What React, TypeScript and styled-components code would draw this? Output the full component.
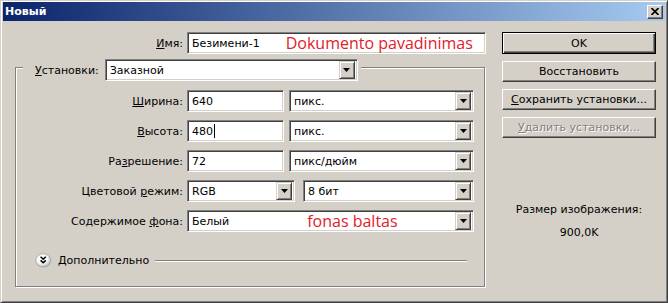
import styled, { createGlobalStyle } from 'styled-components'

const GlobalStyle = createGlobalStyle`
  html, body {
    margin: 0;
    padding: 0;
    background: #d4d0c8;
  }
  body {
    font-family: 'DejaVu Sans', Tahoma, sans-serif;
    font-size: 11px;
    color: #000;
  }
`

const Window = styled.div`
  width: 668px;
  height: 303px;
  box-sizing: border-box;
  background: #d4d0c8;
  border: 1px solid;
  border-color: #d4d0c8 #404040 #404040 #d4d0c8;
  box-shadow: inset 1px 1px 0 #fff, inset -1px -1px 0 #808080;
  padding: 1px 2px 2px 2px;
  display: flex;
  flex-direction: column;
`

const TitleBar = styled.div`
  height: 19px;
  display: flex;
  align-items: center;
  padding: 0 2px 0 2px;
  background: linear-gradient(to right, #0a246a, #a6caf0);
`

const Title = styled.span`
  color: #fff;
  font-weight: bold;
  font-size: 11px;
  flex: 1;
`

const CloseButton = styled.div`
  width: 16px;
  height: 14px;
  box-sizing: border-box;
  display: flex;
  align-items: center;
  justify-content: center;
  background: #d4d0c8;
  border: 1px solid;
  border-color: #fff #404040 #404040 #fff;
  box-shadow: inset -1px -1px 0 #808080;
`

const Body = styled.div`
  display: flex;
  padding: 11px 0 0 12px;
`

const LeftColumn = styled.div`
  width: 471px;
  display: flex;
  flex-direction: column;
`

const RightColumn = styled.div`
  width: 154px;
  margin-left: 16px;
  display: flex;
  flex-direction: column;
  gap: 7px;
`

const FieldRow = styled.div<{ $label: number }>`
  display: grid;
  grid-template-columns: ${(p) => p.$label}px auto;
  column-gap: 4px;
  align-items: center;
`

const Label = styled.span`
  text-align: right;
  white-space: nowrap;
`

const Key = styled.span`
  text-decoration: underline;
`

const Fields = styled.div<{ $gap?: number }>`
  display: flex;
  gap: ${(p) => p.$gap ?? 5}px;
`

const Field = styled.div<{ $w: number }>`
  width: ${(p) => p.$w}px;
  height: 22px;
  box-sizing: border-box;
  background: #fff;
  border: 1px solid;
  border-color: #808080 #fff #fff #808080;
  box-shadow: inset 1px 1px 0 #404040, inset -1px -1px 0 #d4d0c8;
  display: flex;
  align-items: center;
  padding: 0 2px 0 4px;
  white-space: nowrap;
`

const Note = styled.span<{ $at: number }>`
  margin-left: ${(p) => p.$at}px;
  font-family: 'Open Sans', 'Noto Sans', sans-serif;
  font-size: 16px;
  color: #e3202a;
  line-height: 18px;
`

const Caret = styled.span`
  display: inline-block;
  width: 1px;
  height: 14px;
  background: #000;
  margin-left: 1px;
`

const DropArrow = styled.div`
  width: 16px;
  height: 18px;
  box-sizing: border-box;
  margin-left: auto;
  flex: none;
  display: flex;
  align-items: center;
  justify-content: center;
  background: #d4d0c8;
  border: 1px solid;
  border-color: #d4d0c8 #404040 #404040 #d4d0c8;
  box-shadow: inset 1px 1px 0 #fff, inset -1px -1px 0 #808080;
`

const GroupBox = styled.div`
  margin-top: 13px;
  width: 470px;
  height: 220px;
  box-sizing: border-box;
  border: 1px solid #808080;
  box-shadow: inset 1px 1px 0 #fff, 1px 1px 0 #fff;
  display: flex;
  flex-direction: column;
`

const Legend = styled.div`
  align-self: flex-start;
  margin: -9px 0 0 7px;
  padding: 0 3px 0 12px;
  background: #d4d0c8;
  display: flex;
  align-items: center;
  gap: 6px;
`

const GroupRows = styled.div`
  margin-top: 9px;
  display: flex;
  flex-direction: column;
  gap: 8px;
`

const MoreRow = styled.div`
  margin: 21px 0 0 19px;
  height: 15px;
  display: flex;
  align-items: center;
`

const MoreLabel = styled.span`
  margin-left: 6px;
`

const Rule = styled.div`
  flex: 1;
  margin: 0 17px 0 6px;
  border-top: 1px solid #808080;
  border-bottom: 1px solid #fff;
`

const PushButton = styled.div<{ $primary?: boolean; $disabled?: boolean }>`
  height: ${(p) => (p.$primary ? 22 : 21)}px;
  box-sizing: border-box;
  display: flex;
  align-items: center;
  justify-content: center;
  background: #d4d0c8;
  border: 1px solid;
  border-color: ${(p) => (p.$primary ? '#000' : '#fff #404040 #404040 #fff')};
  box-shadow: ${(p) =>
    p.$primary
      ? 'inset 1px 1px 0 #fff, inset -1px -1px 0 #404040, inset -2px -2px 0 #808080'
      : 'inset -1px -1px 0 #808080'};
  color: ${(p) => (p.$disabled ? '#808080' : '#000')};
  text-shadow: ${(p) => (p.$disabled ? '1px 1px 0 #fff' : 'none')};
`

const SizeInfo = styled.div`
  margin-top: 58px;
  display: flex;
  flex-direction: column;
  align-items: center;
  gap: 10px;
`

const Arrow = () => (
  <svg width="7" height="4" viewBox="0 0 7 4">
    <path d="M0 0h7L3.5 4z" fill="#000" />
  </svg>
)

const MoreIcon = () => (
  <svg width="17" height="15" viewBox="0 0 17 15">
    <defs>
      <radialGradient id="more-shade" cx="0.4" cy="0.35" r="0.75">
        <stop offset="0" stopColor="#fff" />
        <stop offset="0.55" stopColor="#f4f4f4" />
        <stop offset="1" stopColor="#a9a9a9" />
      </radialGradient>
    </defs>
    <ellipse cx="8.8" cy="8" rx="7.6" ry="6.6" fill="#b4b4b4" opacity="0.6" />
    <ellipse cx="8.2" cy="7.3" rx="7.4" ry="6.6" fill="url(#more-shade)" stroke="#9c9c9c" strokeWidth="0.7" />
    <path d="M5.6 3.8l2.6 2.4 2.6-2.4M5.6 7.4l2.6 2.4 2.6-2.4" fill="none" stroke="#000" strokeWidth="1.5" />
  </svg>
)

const Select = ({ w, children }: { w: number; children: React.ReactNode }) => (
  <Field $w={w}>
    {children}
    <DropArrow>
      <Arrow />
    </DropArrow>
  </Field>
)

export default function App() {
  return (
    <>
      <GlobalStyle />
      <Window>
        <TitleBar>
          <Title>Новый</Title>
          <CloseButton>
            <svg width="8" height="7" viewBox="0 0 8 7">
              <path d="M0.5 0l7 7M7.5 0l-7 7" stroke="#000" strokeWidth="1.6" />
            </svg>
          </CloseButton>
        </TitleBar>
        <Body>
          <LeftColumn>
            <FieldRow $label={168}>
              <Label>
                <Key>И</Key>мя:
              </Label>
              <Field $w={299}>
                Безимени-1
                <Note $at={26}>Dokumento pavadinimas</Note>
              </Field>
            </FieldRow>

            <GroupBox>
              <Legend>
                <Label>
                  <Key>У</Key>становки:
                </Label>
                <Select w={253}>Заказной</Select>
              </Legend>

              <GroupRows>
                <FieldRow $label={167}>
                  <Label>
                    <Key>Ш</Key>ирина:
                  </Label>
                  <Fields>
                    <Field $w={97}>640</Field>
                    <Select w={185}>пикс.</Select>
                  </Fields>
                </FieldRow>
                <FieldRow $label={167}>
                  <Label>
                    <Key>В</Key>ысота:
                  </Label>
                  <Fields>
                    <Field $w={97}>
                      480
                      <Caret />
                    </Field>
                    <Select w={185}>пикс.</Select>
                  </Fields>
                </FieldRow>
                <FieldRow $label={167}>
                  <Label>
                    Ра<Key>з</Key>решение:
                  </Label>
                  <Fields>
                    <Field $w={97}>72</Field>
                    <Select w={185}>пикс/дюйм</Select>
                  </Fields>
                </FieldRow>
                <FieldRow $label={167}>
                  <Label>
                    Цветовой <Key>р</Key>ежим:
                  </Label>
                  <Fields $gap={8}>
                    <Select w={108}>RGB</Select>
                    <Select w={171}>8 бит</Select>
                  </Fields>
                </FieldRow>
                <FieldRow $label={167}>
                  <Label>
                    Содержимое <Key>ф</Key>она:
                  </Label>
                  <Select w={287}>
                    Белый
                    <Note $at={78}>fonas baltas</Note>
                  </Select>
                </FieldRow>
              </GroupRows>

              <MoreRow>
                <MoreIcon />
                <MoreLabel>Дополнительно</MoreLabel>
                <Rule />
              </MoreRow>
            </GroupBox>
          </LeftColumn>

          <RightColumn>
            <PushButton $primary>OK</PushButton>
            <PushButton>Восстановить</PushButton>
            <PushButton>
              <span>
                <Key>С</Key>охранить установки...
              </span>
            </PushButton>
            <PushButton $disabled>
              <span>
                <Key>У</Key>далить установки...
              </span>
            </PushButton>
            <SizeInfo>
              <span>Размер изображения:</span>
              <span>900,0K</span>
            </SizeInfo>
          </RightColumn>
        </Body>
      </Window>
    </>
  )
}
